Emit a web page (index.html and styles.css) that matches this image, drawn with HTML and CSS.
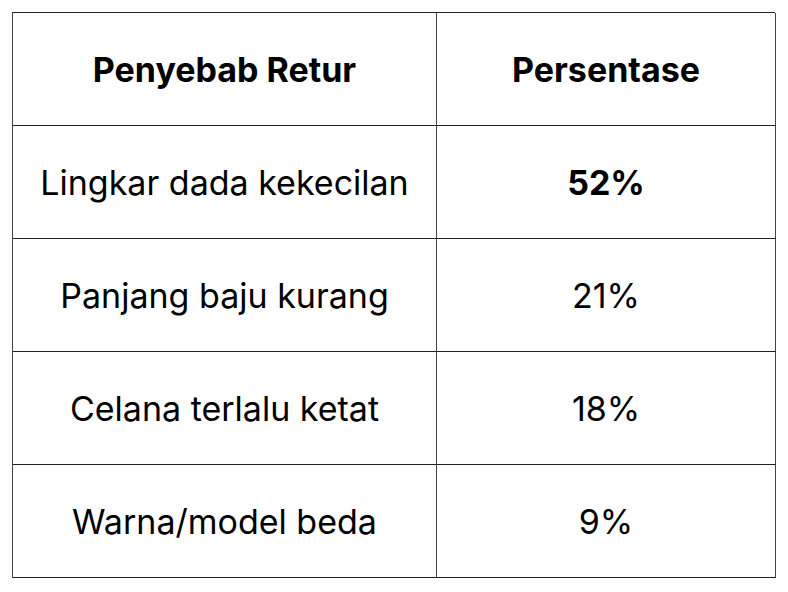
FILE: index.html
```html
<!DOCTYPE html>
<html>
<head>
<meta charset="utf-8">
<link rel="stylesheet" href="styles.css">
</head>
<body>
<div class="table">
  <div class="cell head">Penyebab Retur</div>
  <div class="cell head right">Persentase</div>
  <div class="cell">Lingkar dada kekecilan</div>
  <div class="cell right strong">52%</div>
  <div class="cell">Panjang baju kurang</div>
  <div class="cell right">21%</div>
  <div class="cell">Celana terlalu ketat</div>
  <div class="cell right">18%</div>
  <div class="cell">Warna/model beda</div>
  <div class="cell right">9%</div>
</div>
</body>
</html>
```
FILE: styles.css
```css
html, body {
  margin: 0;
  padding: 0;
  background: #fff;
}
body {
  padding: 12px;
  font-family: "Inter", "Open Sans", sans-serif;
  color: #000;
}
.table {
  display: grid;
  grid-template-columns: 424px 339px;
  grid-auto-rows: 113px;
  width: 763px;
  border-top: 1px solid #222;
  border-left: 1px solid #444;
  box-sizing: border-box;
}
.cell {
  display: flex;
  align-items: center;
  justify-content: center;
  border-right: 1px solid #444;
  border-bottom: 1px solid #222;
  font-size: 34px;
  font-weight: 400;
}
.head, .strong {
  font-weight: 700;
}
```
